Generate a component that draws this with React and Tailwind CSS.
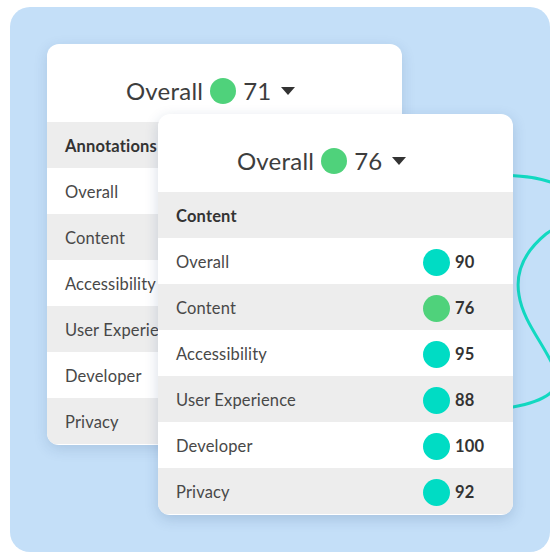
const backRows = [
  { label: "Overall" },
  { label: "Content" },
  { label: "Accessibility" },
  { label: "User Experience" },
  { label: "Developer" },
  { label: "Privacy" },
];

const frontRows = [
  { label: "Overall", score: 90, color: "bg-[#00dcc4]" },
  { label: "Content", score: 76, color: "bg-[#4fd27b]" },
  { label: "Accessibility", score: 95, color: "bg-[#00dcc4]" },
  { label: "User Experience", score: 88, color: "bg-[#00dcc4]" },
  { label: "Developer", score: 100, color: "bg-[#00dcc4]" },
  { label: "Privacy", score: 92, color: "bg-[#00dcc4]" },
];

function Caret() {
  return (
    <svg width="14" height="8" viewBox="0 0 14 8" className="ml-[10px]">
      <path d="M0 0 L14 0 L7 8 Z" fill="#333" />
    </svg>
  );
}

function Header({ score }) {
  return (
    <div className="flex h-[78px] items-center justify-center pr-[28px] pt-[16px] text-[24px] text-[#3d3d3d]">
      <span className="tracking-[0.01em]">Overall</span>
      <span className="mx-[7px] h-[26px] w-[26px] rounded-full bg-[#4fd27b]" />
      <span>{score}</span>
      <Caret />
    </div>
  );
}

function Row({ label, shaded, bold, children }) {
  return (
    <div
      className={`flex h-[46px] items-center pl-[18px] pt-[2px] text-[16.5px] tracking-[0.01em] ${
        shaded ? "bg-[#ededed]" : "bg-white"
      } ${bold ? "font-bold text-[#333]" : "text-[#484848]"}`}
    >
      <span className="flex-1 whitespace-nowrap">{label}</span>
      {children}
    </div>
  );
}

export default function App() {
  return (
    <div
      className="h-[560px] w-[560px] bg-white pl-[10px] pt-[7px]"
      style={{ fontFamily: "Lato, 'Open Sans', sans-serif" }}
    >
      <div className="relative h-[545px] w-[540px] overflow-hidden rounded-[20px] bg-[#c4dff8]">
        <svg
          className="absolute left-0 top-0"
          width="540"
          height="545"
          viewBox="10 7 540 545"
        >
          <path
            d="M480 175 C530 174 565 180 575 200 C582 216 562 222 546 234 C524 252 515 272 519 295 C523 322 545 345 556 372 C562 390 546 401 513 407 L480 410"
            fill="none"
            stroke="#12d9c1"
            strokeWidth="3"
          />
        </svg>

        <div className="absolute left-[37px] top-[37px] h-[401px] w-[355px] overflow-hidden rounded-xl bg-white shadow-[0_4px_14px_rgba(30,60,110,0.15)]">
          <Header score={71} />
          <Row label="Annotations" shaded bold />
          {backRows.map((r, i) => (
            <Row key={r.label} label={r.label} shaded={i % 2 === 1} />
          ))}
        </div>

        <div className="absolute left-[148px] top-[107px] h-[401px] w-[355px] overflow-hidden rounded-xl bg-white shadow-[0_4px_14px_rgba(30,60,110,0.18)]">
          <Header score={76} />
          <Row label="Content" shaded bold />
          {frontRows.map((r, i) => (
            <Row key={r.label} label={r.label} shaded={i % 2 === 1}>
              <span className={`h-[27px] w-[27px] rounded-full ${r.color}`} />
              <span className="ml-[5px] w-[58px] font-bold text-[#333]">
                {r.score}
              </span>
            </Row>
          ))}
        </div>
      </div>
    </div>
  );
}
